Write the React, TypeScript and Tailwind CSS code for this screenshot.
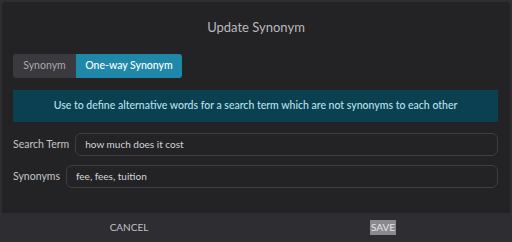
import React from "react";

export default function App() {
  return (
    <div className="w-[512px] h-[242px] bg-[#2d2d32] pt-[2px] px-[2px]" style={{ fontFamily: "Lato, 'Noto Sans', sans-serif" }}>
      <div className="h-[240px] flex flex-col bg-[#232326] rounded-t-[4px] overflow-hidden">
        <div className="flex-1 flex flex-col px-[11px]">
          <div className="h-[52px] flex items-center justify-center text-[13px] text-[#b9b9bd]">Update Synonym</div>
          <div className="flex">
            <div className="flex h-[24px] rounded-[3px] overflow-hidden text-[10.5px]">
              <div className="w-[63px] flex items-center justify-center bg-[#39393e] text-[#a9a9ae]">Synonym</div>
              <div className="w-[106px] flex items-center justify-center bg-[#1f87a8] text-white font-medium">One-way Synonym</div>
            </div>
          </div>
          <div className="mt-[12px] h-[32px] w-[485px] flex items-center justify-center bg-[#0b4050] text-[10.5px] text-[#b8e0ec] font-medium">
            Use to define alternative words for a search term which are not synonyms to each other
          </div>
          <div className="mt-[11px] flex items-center gap-[6px] w-[485px]">
            <span className="text-[10.5px] text-[#c3c3c7]">Search Term</span>
            <div className="flex-1 h-[23px] rounded-[6px] border border-[#3d3d42] flex items-center px-[9px] text-[10px] text-[#d4d4d8]">how much does it cost</div>
          </div>
          <div className="mt-[9px] flex items-center gap-[6px] w-[485px]">
            <span className="text-[10.5px] text-[#c3c3c7]">Synonyms</span>
            <div className="flex-1 h-[23px] rounded-[6px] border border-[#3d3d42] flex items-center px-[9px] text-[10px] text-[#d4d4d8]">fee, fees, tuition</div>
          </div>
        </div>
        <div className="h-[29px] bg-[#2d2d32] flex items-center text-[10px] text-[#c3c3c7]">
          <div className="flex-1 flex justify-center">CANCEL</div>
          <div className="flex-1 flex justify-center"><span className="bg-[#8a8a8e] text-[#e4e4e6] px-[1px]">SAVE</span></div>
        </div>
      </div>
    </div>
  );
}
